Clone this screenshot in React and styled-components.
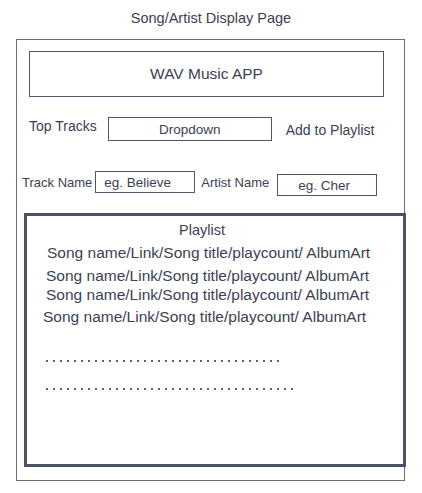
import React from 'react';
import styled, { createGlobalStyle } from 'styled-components';

const GlobalStyle = createGlobalStyle`
  body {
    margin: 0;
    background: #ffffff;
    font-family: "Liberation Sans", Arial, sans-serif;
    color: #3c4152;
  }
`;

const songs = [
  { indent: 20, gap: 6 },
  { indent: 19, gap: 7 },
  { indent: 19, gap: 3 },
  { indent: 16, gap: 6 },
];

const dots = [
  { width: 233, gap: 35 },
  { width: 247, gap: 26 },
];

function App() {
  return (
    <Page>
      <GlobalStyle />
      <Title>Song/Artist Display Page</Title>
      <Frame>
        <Header>WAV Music APP</Header>

        <TopRow>
          <Label $size={14}>Top Tracks</Label>
          <Dropdown>Dropdown</Dropdown>
          <Action>Add to Playlist</Action>
        </TopRow>

        <SearchRow>
          <Label $size={13}>Track Name</Label>
          <Field $space={3} $shift={0} $pad={8}>eg. Believe</Field>
          <Label $size={13} $space={6}>Artist Name</Label>
          <Field $space={8} $shift={3} $pad={20}>eg. Cher</Field>
        </SearchRow>

        <Playlist>
          <PlaylistTitle>Playlist</PlaylistTitle>
          {songs.map((song, index) => (
            <SongRow key={index} $indent={song.indent} $gap={song.gap}>
              Song name/Link/Song title/playcount/ AlbumArt
            </SongRow>
          ))}
          {dots.map((line, index) => (
            <DotLine key={index} $width={line.width} $gap={line.gap} />
          ))}
        </Playlist>
      </Frame>
    </Page>
  );
}

const Page = styled.div`
  width: 422px;
  height: 493px;
`;

const Title = styled.div`
  padding-top: 10px;
  height: 39px;
  box-sizing: border-box;
  text-align: center;
  font-size: 14.5px;
  line-height: 17px;
`;

const Frame = styled.div`
  margin-left: 16px;
  width: 389px;
  height: 442px;
  box-sizing: border-box;
  border: 1.5px solid #6b6f7c;
  padding-top: 11px;
`;

const Header = styled.div`
  margin: 0 20px 0 12px;
  height: 46px;
  box-sizing: border-box;
  border: 1.5px solid #50556a;
  display: flex;
  align-items: center;
  justify-content: center;
  font-size: 15.5px;
`;

const TopRow = styled.div`
  display: flex;
  align-items: center;
  margin-top: 17px;
  padding-left: 12px;
  height: 24px;
`;

const Label = styled.span`
  font-size: ${({ $size }) => $size}px;
  margin-left: ${({ $space }) => $space || 0}px;
  white-space: nowrap;
`;

const Dropdown = styled.div`
  margin-left: 11px;
  width: 164px;
  height: 24px;
  box-sizing: border-box;
  border: 1.5px solid #50556a;
  display: flex;
  align-items: center;
  justify-content: center;
  font-size: 13.5px;
  transform: translateY(3px);
`;

const Action = styled.span`
  margin-left: 14px;
  font-size: 14px;
  transform: translateY(4px);
`;

const SearchRow = styled.div`
  display: flex;
  align-items: center;
  margin-top: 32px;
  padding-left: 5px;
  height: 24px;
`;

const Field = styled.div`
  flex: none;
  margin-left: ${({ $space }) => $space}px;
  width: 100px;
  height: 22px;
  box-sizing: border-box;
  border: 1.5px solid #50556a;
  padding-left: ${({ $pad }) => $pad}px;
  display: flex;
  align-items: center;
  font-size: 13.5px;
  transform: translateY(${({ $shift }) => $shift}px);
`;

const Playlist = styled.div`
  margin-top: 19px;
  margin-left: 7px;
  width: 382px;
  height: 254px;
  box-sizing: border-box;
  border: 3px solid #4b5064;
  padding-top: 6px;
`;

const PlaylistTitle = styled.div`
  text-align: center;
  font-size: 14.5px;
  line-height: 17px;
  padding-right: 26px;
`;

const SongRow = styled.div`
  margin-top: ${({ $gap }) => $gap}px;
  padding-left: ${({ $indent }) => $indent}px;
  font-size: 15.5px;
  line-height: 16px;
  white-space: nowrap;
`;

const DotLine = styled.div`
  margin-top: ${({ $gap }) => $gap}px;
  margin-left: 19px;
  width: ${({ $width }) => $width}px;
  height: 2px;
  background: linear-gradient(to right, #5d6272 2px, transparent 2px);
  background-size: 7px 2px;
`;

export default App;
